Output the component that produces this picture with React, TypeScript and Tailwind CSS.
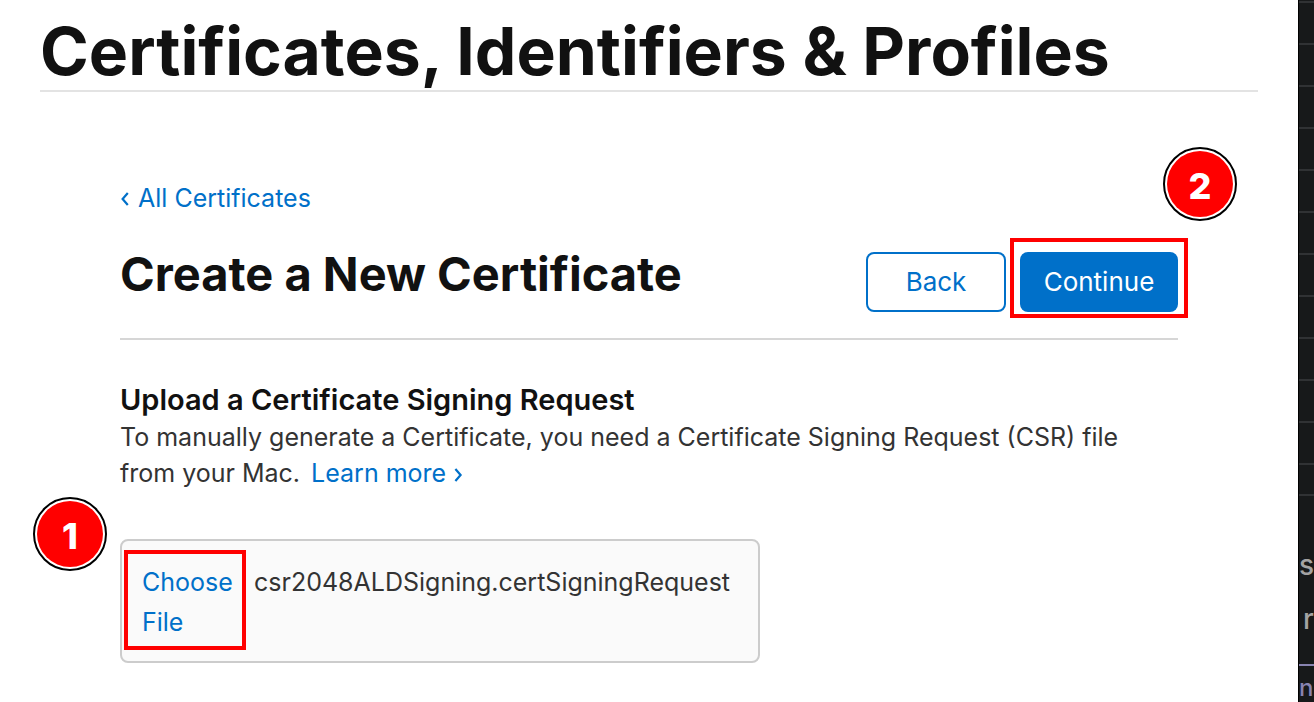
import { useRef } from "react";

const rows = Array.from({ length: 11 }, (_, i) => i);

function Badge({ value, className }: { value: number; className: string }) {
  return (
    <span
      className={`absolute flex size-[74px] items-center justify-center rounded-full border-2 border-black bg-white p-0.5 ${className}`}
    >
      <span className="flex size-full items-center justify-center rounded-full bg-[#ff0000] pt-1 text-4xl font-extrabold text-white">
        {value}
      </span>
    </span>
  );
}

function Chevron({ direction }: { direction: "left" | "right" }) {
  return (
    <svg
      viewBox="0 0 10 16"
      aria-hidden="true"
      className="inline-block h-4 w-2.5"
      fill="none"
      stroke="currentColor"
      strokeWidth="2.2"
    >
      <path d={direction === "left" ? "M7.8 3 2.6 9l5.2 6" : "M2.4 2l5.2 6-5.2 6"} />
    </svg>
  );
}

function SidePanel() {
  return (
    <aside className="flex w-4 shrink-0 flex-col overflow-hidden border-l border-black bg-[#17191a] text-[#a3a3a3]">
      <div className="h-px shrink-0" />
      {rows.map((row) => (
        <div key={row} className="h-[42px] shrink-0 border-t-2 border-[#303234]" />
      ))}
      <div className="h-[31px] shrink-0 border-t-2 border-[#303234]" />
      <div className="flex h-[170px] shrink-0 flex-col border-t-2 border-[#303234] pt-[42px] text-[28px] leading-[54px] font-medium">
        <span>s</span>
        <span className="pl-1">r</span>
      </div>
      <div className="border-t-2 border-[#8884b0] pt-1 text-2xl leading-9 font-medium text-[#8884b0]">n</div>
    </aside>
  );
}

export default function App() {
  const fileInput = useRef<HTMLInputElement>(null);

  return (
    <div className="flex h-screen overflow-hidden bg-white font-['Inter','Liberation_Sans',sans-serif] text-[25px] leading-9 text-[#333333]">
      <main className="min-w-0 flex-1 px-10 pt-3">
        <header className="border-b-2 border-[#e3e3e3]">
          <h1 className="text-[66px] leading-[78px] font-bold whitespace-nowrap text-[#111111]">
            Certificates, Identifiers &amp; Profiles
          </h1>
        </header>

        <div className="px-20 pt-[88px]">
          <a href="#certificates" className="flex w-fit items-center gap-2 text-[#0070c9]">
            <Chevron direction="left" />
            All Certificates
          </a>

          <div className="mt-9 flex items-start justify-between border-b-2 border-[#d6d6d6] pb-[26px]">
            <h2 className="text-[47px] leading-[44px] font-bold whitespace-nowrap text-[#111111]">
              Create a New Certificate
            </h2>
            <div className="flex gap-3.5 text-[26px]">
              <button
                type="button"
                className="h-[60px] w-[140px] rounded-lg border-2 border-[#0070c9] text-[#0070c9]"
              >
                Back
              </button>
              <div className="relative">
                <button type="button" className="h-[60px] w-[158px] rounded-lg bg-[#0070c9] text-white">
                  Continue
                </button>
                <span className="pointer-events-none absolute -inset-x-2.5 -top-3.5 -bottom-1.5 border-4 border-[#ff0000]" />
                <Badge value={2} className="-top-[105px] -right-[59px]" />
              </div>
            </div>
          </div>

          <h3 className="mt-[41px] text-[29px] leading-[38px] font-semibold text-[#111111]">
            Upload a Certificate Signing Request
          </h3>
          <p>
            To manually generate a Certificate, you need a Certificate Signing Request (CSR) file from your Mac.{" "}
            <a href="#learn-more" className="ml-1 whitespace-nowrap text-[#0070c9]">
              Learn more <Chevron direction="right" />
            </a>
          </p>

          <div className="relative mt-12 flex w-fit items-start gap-3 rounded-lg border-2 border-[#cccccc] bg-[#fafafa] pt-[21px] pr-7 pb-[19px] pl-5 leading-10">
            <button
              type="button"
              onClick={() => fileInput.current?.click()}
              className="w-[100px] text-left text-[#0070c9]"
            >
              Choose File
            </button>
            <input ref={fileInput} type="file" aria-label="Certificate signing request" className="hidden" />
            <span>csr2048ALDSigning.certSigningRequest</span>
            <span className="pointer-events-none absolute top-[9px] left-0.5 h-[100px] w-[122px] border-4 border-[#ff0000]" />
            <Badge value={1} className="-top-11 -left-[89px]" />
          </div>
        </div>
      </main>
      <SidePanel />
    </div>
  );
}
